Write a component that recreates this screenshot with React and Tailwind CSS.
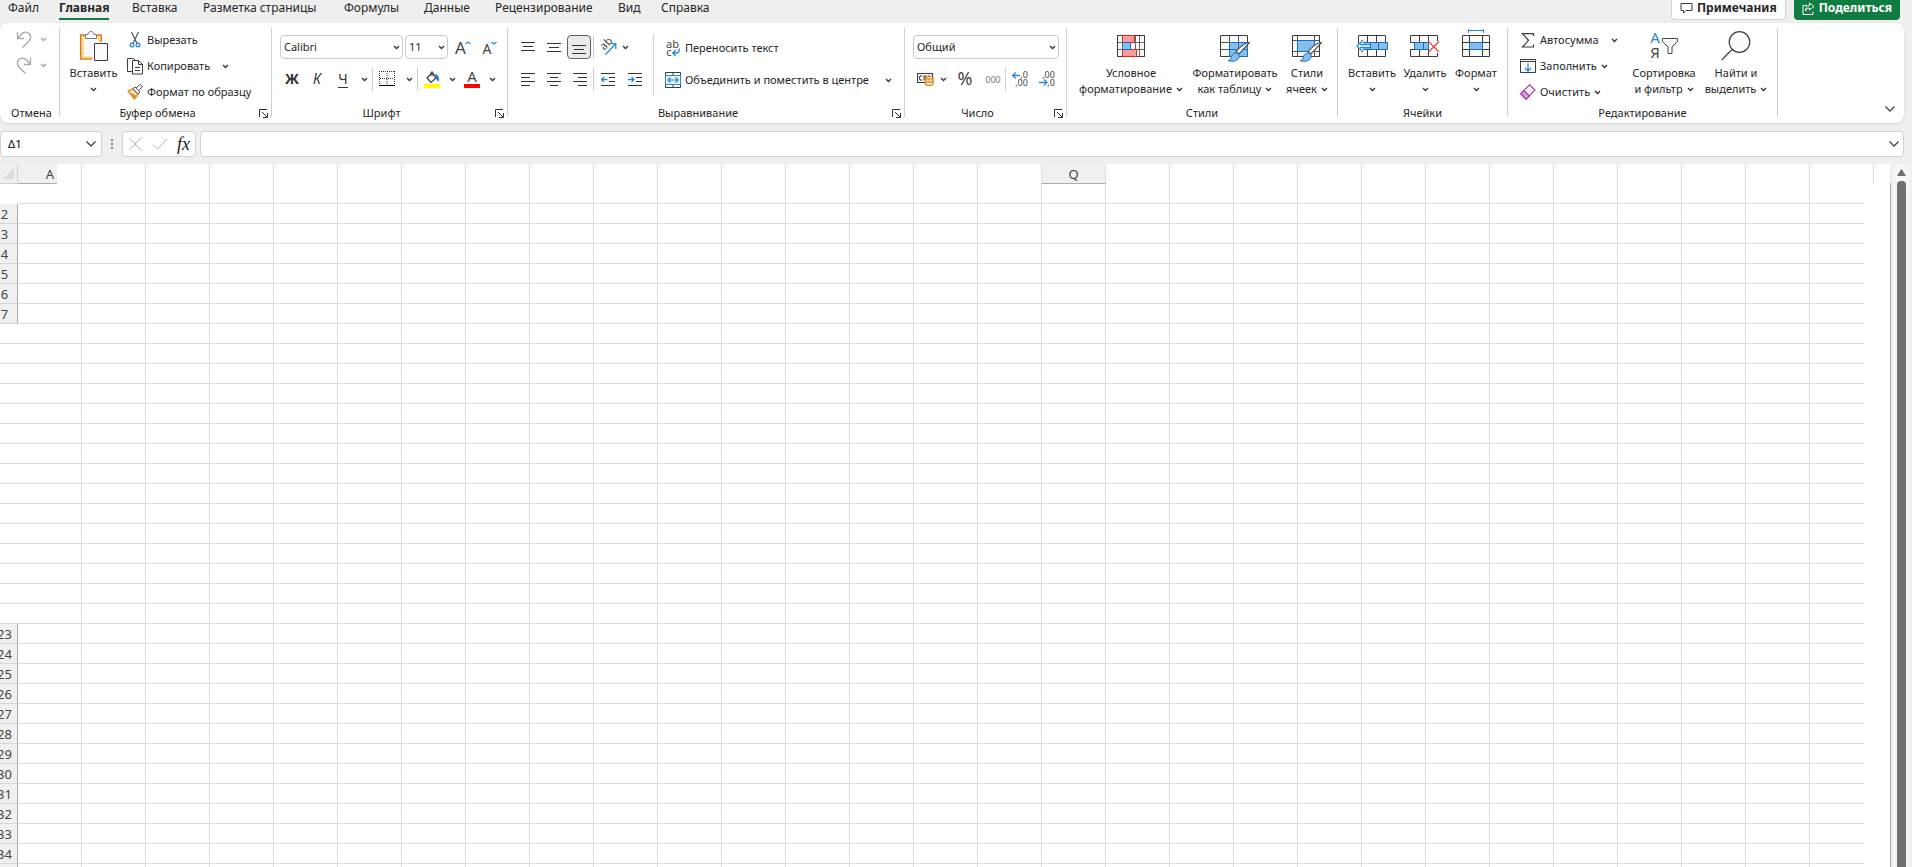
const COLS = Array.from({ length: 27 }, (_, i) => i);
const ROWS = Array.from({ length: 35 }, (_, i) => i + 1);
const COLUMN_NAMES = { 0: "A", 16: "Q" };

const TABS = [
    { name: "Файл", width: "w-[51px]" },
    { name: "Главная", width: "w-[73px]", active: true },
    { name: "Вставка", width: "w-[71px]" },
    { name: "Разметка страницы", width: "w-[141px]" },
    { name: "Формулы", width: "w-[80px]" },
    { name: "Данные", width: "w-[71px]" },
    { name: "Рецензирование", width: "w-[123px]" },
    { name: "Вид", width: "w-[43px]" },
    { name: "Справка", width: "w-[60px]" },
];

function Icon({ w = 16, h = 16, children, className = "" }) {
    return (
        <svg
            width={w}
            height={h}
            viewBox={`0 0 ${w} ${h}`}
            fill="none"
            stroke="#3b3b3b"
            className={`shrink-0 ${className}`}
            aria-hidden="true"
        >
            {children}
        </svg>
    );
}

// letters and digits inside an icon
function Glyph({ x, y, size, color = "#444", children, transform }) {
    return (
        <text x={x} y={y} fontSize={size} fill={color} stroke="none" textAnchor="middle" transform={transform}>
            {children}
        </text>
    );
}

function Chevron({ color = "#333", className = "" }) {
    return (
        <Icon w={7} h={5} className={className}>
            <path d="M1 1l2.5 2.5L6 1" stroke={color} strokeWidth="1.3" />
        </Icon>
    );
}

function BigChevron() {
    return (
        <Icon w={12} h={8}>
            <path d="M1.5 1.5L6 6l4.5-4.5" stroke="#444" strokeWidth="1.3" />
        </Icon>
    );
}

function Divider() {
    return <div className="mt-[5px] h-[89px] w-px shrink-0 bg-[#d1d1d1]" />;
}

function SmallDivider() {
    return <div className="h-6 w-px shrink-0 bg-[#d1d1d1]" />;
}

function Group({ label, width, launcher, children }) {
    return (
        <section className={`flex shrink-0 flex-col ${width}`} aria-label={label}>
            <div className="flex h-[82px] items-start">{children}</div>
            <div className="flex h-4 items-center">
                <h2 className="flex-1 text-center text-[11px] leading-4">{label}</h2>
                {launcher && (
                    <button type="button" aria-label={`Параметры: ${label}`} className="flex w-4 pl-1 pt-px">
                        <Icon w={9} h={9}>
                            <path d="M8 .5H.5V8M3 3l5 5M8.5 4v4.5H4" stroke="#333" />
                        </Icon>
                    </button>
                )}
            </div>
        </section>
    );
}

function IconButton({ label, width = "w-[26px]", active, children }) {
    return (
        <button
            type="button"
            aria-label={label}
            className={`flex h-6 shrink-0 items-center justify-center ${width} ${
                active ? "rounded border border-[#616161] bg-[#ebebeb]" : ""
            }`}
        >
            {children}
        </button>
    );
}

function BigButton({ icon, lines, width, chevronBelow, top = "pt-2", iconHeight = "h-[30px]" }) {
    return (
        <button type="button" className={`flex shrink-0 flex-col items-center ${width} ${top}`}>
            <span className={`flex items-start justify-center ${iconHeight}`}>{icon}</span>
            {lines.map((line, i) => (
                <span key={line} className="flex h-4 items-center gap-1 whitespace-nowrap text-[11px] leading-4">
                    {line}
                    {!chevronBelow && i === lines.length - 1 && <Chevron />}
                </span>
            ))}
            {chevronBelow && (
                <span className="flex h-4 items-center">
                    <Chevron />
                </span>
            )}
        </button>
    );
}

function RowButton({ icon, label, chevron, gap = "gap-1" }) {
    return (
        <button type="button" className={`flex h-[26px] items-center whitespace-nowrap text-[11px] ${gap}`}>
            <span className="flex items-center gap-1">
                <span className="flex w-4 justify-center">{icon}</span>
                {label}
            </span>
            {chevron && <Chevron />}
        </button>
    );
}

function Dropdown({ label, value, width }) {
    return (
        <div className={`relative shrink-0 ${width}`}>
            <select
                aria-label={label}
                defaultValue={value}
                className="block h-6 w-full appearance-none rounded border border-[#c8c8c8] bg-white px-[3px] text-[11px]"
            >
                <option>{value}</option>
            </select>
            <Chevron className="pointer-events-none absolute right-[3px] top-[10px]" />
        </div>
    );
}

function UndoIcon({ flip }) {
    return (
        <Icon w={16} h={17} className={flip ? "-scale-x-100" : ""}>
            <path d="M1.5 1v6.5H8M1.5 7.5L5 3.5C7.5 .5 11 .5 13 2.5s2 5 0 7.5L6.500 16.500" stroke="#a6a6a6" strokeWidth="1.3" />
        </Icon>
    );
}

function PasteIcon() {
    return (
        <Icon w={28} h={31}>
            <path d="M2.5 5.5h17v21h-17z" fill="#fafafa" stroke="#f5d98d" strokeWidth="2.5" />
            <path d="M6 4H.7v24H13M17 4h4.3v8" stroke="#e07b12" strokeWidth="1.4" />
            <path d="M5.5 7.5v-4H8C8.5 1.5 9.5.5 11 .5s2.5 1 3 3h2.5v4z" fill="#fff" stroke="#777" />
            <path d="M12 11h16v20H12z" fill="#fff" stroke="none" />
            <path d="M14.5 12.5h13v17h-13z" fill="#fafafa" stroke="#3b3b3b" />
        </Icon>
    );
}

function ScissorsIcon() {
    return (
        <Icon w={12} h={16}>
            <path d="M2.5 0L8 11.5M9.5 0L4 11.5" stroke="#555" strokeWidth="1.2" />
            <circle cx="3" cy="13" r="1.9" fill="#cfe6f7" stroke="#2b8ad0" strokeWidth="1.2" />
            <circle cx="9" cy="13" r="1.9" fill="#cfe6f7" stroke="#2b8ad0" strokeWidth="1.2" />
        </Icon>
    );
}

function CopyIcon() {
    return (
        <Icon w={16} h={17}>
            <path d="M5 13.5H.5V.5h6l2 2" />
            <path d="M5.5 2.5h6l4 4V16h-10z" fill="#fff" />
            <path d="M11.5 2.5v4h4M8 9.5h5M8 12.5h5" />
        </Icon>
    );
}

function BrushIcon() {
    return (
        <Icon w={16} h={16}>
            <path d="M1 7l5-2 5 5-3.5 5z" fill="#fce3b5" stroke="#e07b12" strokeWidth="1.2" />
            <path d="M4 9l5.5 3-2 3-5-6z" fill="#f28c1e" stroke="none" />
            <path d="M6 4.500L8 3l5 5-2 2zM9 4l4-3.5 2.5 2L12 6.500" fill="#fff" stroke="#555" />
        </Icon>
    );
}

function BordersIcon() {
    return (
        <Icon>
            <path d="M.5 0v14M15.5 0v14M0 .5h16M8 2v12M1 7.5h14" strokeDasharray="1 1" stroke="#333" />
            <path d="M0 14.5h16" stroke="#000" />
        </Icon>
    );
}

function FillIcon() {
    return (
        <Icon w={16} h={17}>
            <path d="M3 7l5-5 4 5-5 4.5z" fill="#fafafa" strokeWidth="1.2" />
            <path d="M7 5V1.5C7 .5 9 .5 9 1.5V5" />
            <path d="M11 3.5c3 .5 4 3 3.5 6.5-2-1-2-3-3.5-6.5z" fill="#2b7cc4" stroke="#2b7cc4" />
            <path d="M0 13h16v4H0z" fill="#ff0" stroke="none" />
        </Icon>
    );
}

function FontColorIcon() {
    return (
        <Icon w={16} h={17}>
            <Glyph x={8} y={11} size={15}>A</Glyph>
            <path d="M0 13h16v4H0z" fill="#f00" stroke="none" />
        </Icon>
    );
}

function FontSizeIcon({ down }) {
    return (
        <Icon w={16} h={15}>
            {down ? <Glyph x={5} y={14} size={14}>A</Glyph> : <Glyph x={5.5} y={14} size={17}>A</Glyph>}
            <path d={down ? "M9.5 2L12 4l2.5-2" : "M10.5 4L13 2l2.5 2"} stroke="#2b8ad0" strokeWidth="1.3" />
        </Icon>
    );
}

// every entry of `rows` is one line: [x start, x end, y]
function LinesIcon({ rows, children }) {
    return (
        <Icon w={14} h={15}>
            {rows.map(([a, b, y]) => (
                <path key={y} d={`M${a} ${y}.5H${b}`} stroke="#333" />
            ))}
            {children}
        </Icon>
    );
}

function OrientationIcon() {
    return (
        <Icon w={17} h={16}>
            <Glyph x={6.5} y={8} size={11} transform="rotate(-45 6.5 5)">ab</Glyph>
            <path d="M5.5 15.5L15.5 5M10.5 4.7h5.3V10" stroke="#2b8ad0" strokeWidth="1.3" />
        </Icon>
    );
}

function WrapIcon() {
    return (
        <Icon w={14} h={17}>
            <Glyph x={6.5} y={8} size={11}>ab</Glyph>
            <Glyph x={3} y={16} size={11}>c</Glyph>
            <path d="M13.3 8.500v1.5c0 2-1 3-3 3H7M9.700 10l-3 3 3 3" stroke="#2b8ad0" strokeWidth="1.3" />
        </Icon>
    );
}

function MergeIcon() {
    return (
        <Icon>
            <path d="M.5 .5h15v15H.5zM8 .5v3M8 12.5v3" fill="#fff" />
            <path d="M.5 3.5h15v9H.5z" fill="#e3f0fa" stroke="#2b8ad0" />
            <path d="M3 8h10M5.5 5.5L3 8l2.5 2.5M10.5 5.5L13 8l-2.5 2.5" stroke="#2b8ad0" strokeWidth="1.2" />
        </Icon>
    );
}

function CurrencyIcon() {
    return (
        <Icon w={17} h={14}>
            <path d="M.5 1.5h15v9H.5z" fill="#fff" strokeWidth="1.2" />
            <path d="M5 4c-2-.5-2.5 1-2.5 2S3 8.500 5 8M7 8.500V4h2v4.500M11 4h2" strokeWidth="1.1" />
            <path d="M8.500 6c0-2 7.5-2 7.5 0v6c0 2-7.5 2-7.5 0z" fill="#fce3b5" stroke="#e07b12" strokeWidth="1.2" />
            <path d="M8.500 6c0 1.5 7.5 1.5 7.5 0M8.500 9c0 1.5 7.5 1.5 7.5 0" stroke="#e07b12" strokeWidth="1.2" />
        </Icon>
    );
}

function PercentIcon() {
    return (
        <Icon>
            <Glyph x={8} y={14} size={18}>%</Glyph>
        </Icon>
    );
}

function ThousandsIcon() {
    return (
        <Icon w={16} h={9}>
            <Glyph x={8} y={8} size={9} color="#777">000</Glyph>
        </Icon>
    );
}

function DecimalIcon({ remove }) {
    return (
        <Icon w={16} h={16}>
            <Glyph x={remove ? 9.5 : 12} y={7} size={9}>{remove ? ",00" : ",0"}</Glyph>
            <Glyph x={remove ? 12 : 9.5} y={15} size={9}>{remove ? ",0" : ",00"}</Glyph>
            <path
                d={remove ? "M0 11.5h8M5 8.500l3 3-3 3" : "M8 4.500H.5M3.700 1.500l-3 3 3 3"}
                stroke="#2b8ad0"
                strokeWidth="1.3"
            />
        </Icon>
    );
}

function ConditionalIcon() {
    return (
        <Icon w={28} h={22}>
            <path d="M.5 .5h27v21H.5zM.5 7.5h27M.5 14.5h27M5.5 .5v21M18.5 .5v21M22.5 .5v21" fill="#fafafa" stroke="#666" />
            <path d="M.5 .5h27v21H.5z" />
            <path d="M5.5 .5h12v7h-12zM5.5 14.5h14v7h-14z" fill="#ff9a9a" stroke="#d92b20" />
            <path d="M5.5 7.5h8v7h-8z" fill="#83beec" stroke="#1a6fc0" />
        </Icon>
    );
}

function PaintBrush() {
    return (
        <>
            <path d="M29.500 7.5L19 19l-3-2.5C20 12 26 7.5 29.500 7.5z" fill="#fff" stroke="#555" strokeWidth="1.2" />
            <path d="M16.500 18c2 .5 3.5 2 2.5 4.500-2 4-7 4.500-11 3 3-.5 3-2 3.5-4s3-3.800 5-3.500z" fill="#83beec" stroke="#1a6fc0" />
        </>
    );
}

function FormatTableIcon() {
    return (
        <Icon w={30} h={27}>
            <path d="M.5 .5h27v21H.5z" fill="#fafafa" />
            <path d="M9.5 7.5h18v14h-18z" fill="#83beec" stroke="none" />
            <path d="M.5 7.5h27M.5 14.5h9M9.5 .5v21M18.5 .5v7" stroke="#555" />
            <path d="M9.5 14.5h18M18.5 7.5v14M9.5 7.5h18v14h-18z" stroke="#1a6fc0" />
            <PaintBrush />
        </Icon>
    );
}

function CellStylesIcon() {
    return (
        <Icon w={30} h={27}>
            <path d="M.5 .5h27v21H.5z" fill="#fafafa" />
            <path d="M.5 5.5h27M.5 16.5h27M5.5 .5v21M22.5 .5v21" stroke="#555" />
            <path d="M5.5 5.5h17v11h-17z" fill="#83beec" stroke="#1a6fc0" />
            <PaintBrush />
        </Icon>
    );
}

function InsertCellsIcon() {
    return (
        <Icon w={32} h={22}>
            <path d="M2.5 .5h27v21h-27zM11.5 .5v21M20.5 .5v21" fill="#fafafa" />
            <path d="M5.5 7.5h26v7h-26zM14.5 7.5v7M22.5 7.5v7" fill="#83beec" stroke="#1a6fc0" />
            <path d="M0 11l7-7v4.500h7v4H7V17z" fill="#fff" stroke="none" />
            <path d="M14 9.5H4M14 12.5H4M7 5l-6 6 6 6" stroke="#2b8ad0" strokeWidth="1.3" />
        </Icon>
    );
}

function DeleteCellsIcon() {
    return (
        <Icon w={30} h={22}>
            <path d="M.5 7.5v-7h27v7zM.5 14.5v7h27v-7zM9.5 .5v7M18.5 .5v7M9.5 14.5v7M18.5 14.5v7" fill="#fafafa" />
            <path d="M4.5 7.5h14v7h-14zM13.5 7.5v7" fill="#83beec" stroke="#1a6fc0" />
            <path d="M19 6h11v12H19z" fill="#fff" stroke="none" />
            <path d="M18.5 6.5L29 17M29 6.5L18.5 17" stroke="#e8483f" strokeWidth="1.3" />
        </Icon>
    );
}

function FormatCellsIcon() {
    return (
        <Icon w={28} h={28}>
            <path d="M6.5 1.5h15M6.5 0v4M21.5 0v4" stroke="#2b8ad0" />
            <path d="M.5 6.5h27v21H.5zM.5 13.5h27M.5 20.5h27M7.5 6.5v21M20.5 6.5v21" fill="#fafafa" />
            <path d="M7.5 13.5h13v7h-13z" fill="#83beec" stroke="#1a6fc0" />
        </Icon>
    );
}

function SumIcon() {
    return (
        <Icon w={14} h={15}>
            <path d="M12.5 3V.7h-11l6 6.6-6 6.7h11v-2.500" strokeWidth="1.2" />
        </Icon>
    );
}

function FillDownIcon() {
    return (
        <Icon w={16} h={15}>
            <path d="M.5 .5h15v13H.5zM.5 2.5h15" fill="#fafafa" />
            <path d="M8 4.500V12M5 9l3 3 3-3" stroke="#2b8ad0" strokeWidth="1.3" />
        </Icon>
    );
}

function EraserIcon() {
    return (
        <Icon w={16} h={16}>
            <path d="M9.5 .8L15 6l-9 9.200L.8 9.800z" fill="#fff" stroke="#a33fae" strokeWidth="1.2" />
            <path d="M4 6.500L9.500 12 6 15.200.8 9.800z" fill="#d99ae0" stroke="#a33fae" strokeWidth="1.2" />
        </Icon>
    );
}

function SortFilterIcon() {
    return (
        <Icon w={28} h={28}>
            <Glyph x={5} y={12} size={15} color="#2b8ad0">А</Glyph>
            <Glyph x={5} y={27} size={15}>Я</Glyph>
            <path d="M12.5 7.5h15v3L22 16v6.500h-4V16l-5.500-5.500z" fill="#fafafa" stroke="#444" />
        </Icon>
    );
}

function FindIcon() {
    return (
        <Icon w={30} h={30}>
            <circle cx="18.5" cy="11" r="10.3" fill="#fafafa" stroke="#444" strokeWidth="1.2" />
            <path d="M11 18.5L.7 29" stroke="#444" strokeWidth="1.2" />
        </Icon>
    );
}

function TopBar() {
    return (
        <header className="flex h-[23px] items-start overflow-hidden pl-2">
            <nav className="flex">
                {TABS.map((tab) => (
                    <a key={tab.name} href="#" className={`block whitespace-nowrap text-xs leading-4 ${tab.width}`}>
                        <span
                            className={
                                tab.active
                                    ? "inline-block h-5 border-b-2 border-[#107c41] font-bold"
                                    : "inline-block"
                            }
                        >
                            {tab.name}
                        </span>
                    </a>
                ))}
            </nav>
            <div className="ml-auto mr-3 flex gap-2 text-xs font-bold leading-4">
                <button type="button" className="flex h-5 items-center gap-1 rounded-b border border-t-0 border-[#d1d1d1] bg-white px-2 pb-1">
                    <Icon w={13} h={12}>
                        <path d="M1 1.5h11v7H6L3.5 11V8.500H1z" />
                    </Icon>
                    Примечания
                </button>
                <button type="button" className="flex h-5 items-center gap-1 rounded-b bg-[#107c41] px-2 pb-1 text-white">
                    <Icon w={13} h={13}>
                        <path d="M5 3.5H1v9h10v-3M7.5 1L12 4.500 7.500 8V6c-2 0-3 1-4 3 0-3 1.5-5.500 4-5.500z" stroke="#fff" />
                    </Icon>
                    Поделиться
                </button>
            </div>
        </header>
    );
}

function Ribbon() {
    return (
        <div className="mr-2 flex h-[100px] rounded-lg bg-white shadow">
            <Group label="Отмена" width="w-[59px] pl-1">
                <div className="flex flex-col gap-[9px] pl-3 pt-2">
                    {["Отменить", "Вернуть"].map((name, i) => (
                        <button key={name} type="button" aria-label={name} className="flex items-center gap-2">
                            <UndoIcon flip={i === 1} />
                            <Chevron color="#a6a6a6" />
                        </button>
                    ))}
                </div>
            </Group>
            <Divider />
            <Group label="Буфер обмена" width="w-[211px]" launcher>
                <BigButton
                    icon={<PasteIcon />}
                    lines={["Вставить"]}
                    width="w-[67px]"
                    chevronBelow
                    iconHeight="h-[34px]"
                />
                <div className="pt-1">
                    <RowButton icon={<ScissorsIcon />} label="Вырезать" />
                    <RowButton icon={<CopyIcon />} label="Копировать" chevron gap="gap-3" />
                    <RowButton icon={<BrushIcon />} label="Формат по образцу" />
                </div>
            </Group>
            <Divider />
            <Group label="Шрифт" width="w-[235px]" launcher>
                <div className="flex flex-col gap-2 pl-2 pt-3">
                    <div className="flex items-center">
                        <Dropdown label="Шрифт" value="Calibri" width="mr-[2px] w-[123px]" />
                        <Dropdown label="Размер шрифта" value="11" width="w-[43px]" />
                        <IconButton label="Увеличить размер шрифта" width="w-[30px]">
                            <FontSizeIcon />
                        </IconButton>
                        <IconButton label="Уменьшить размер шрифта" width="w-6">
                            <FontSizeIcon down />
                        </IconButton>
                    </div>
                    <div className="flex items-center text-sm text-[#333]">
                        <IconButton label="Полужирный" width="w-6">
                            <b>Ж</b>
                        </IconButton>
                        <IconButton label="Курсив">
                            <i>К</i>
                        </IconButton>
                        <IconButton label="Подчеркнутый">
                            <span className="border-b border-[#333] leading-4">Ч</span>
                        </IconButton>
                        <IconButton label="Вид подчеркивания" width="w-4">
                            <Chevron />
                        </IconButton>
                        <SmallDivider />
                        <IconButton label="Границы" width="w-7">
                            <BordersIcon />
                        </IconButton>
                        <IconButton label="Вид границ" width="w-4">
                            <Chevron />
                        </IconButton>
                        <SmallDivider />
                        <IconButton label="Цвет заливки" width="w-7">
                            <FillIcon />
                        </IconButton>
                        <IconButton label="Выбор заливки" width="w-3">
                            <Chevron />
                        </IconButton>
                        <IconButton label="Цвет текста" width="w-7">
                            <FontColorIcon />
                        </IconButton>
                        <IconButton label="Выбор цвета текста" width="w-3">
                            <Chevron />
                        </IconButton>
                    </div>
                </div>
            </Group>
            <Divider />
            <Group label="Выравнивание" width="w-[396px]" launcher>
                <div className="flex flex-col gap-2 pl-[7px] pt-3">
                    <div className="flex items-center">
                        <IconButton label="По верхнему краю">
                            <LinesIcon rows={[[0, 14, 2], [2, 12, 6], [0, 14, 10]]} />
                        </IconButton>
                        <IconButton label="По середине">
                            <LinesIcon rows={[[0, 14, 3], [2, 12, 7], [0, 14, 11]]} />
                        </IconButton>
                        <IconButton label="По нижнему краю" width="w-6" active>
                            <LinesIcon rows={[[0, 14, 5], [2, 12, 9], [0, 14, 13]]} />
                        </IconButton>
                        <div className="ml-[2px] flex items-center">
                            <SmallDivider />
                            <IconButton label="Ориентация" width="w-[28px]">
                                <OrientationIcon />
                            </IconButton>
                            <Chevron />
                        </div>
                    </div>
                    <div className="flex items-center">
                        <IconButton label="По левому краю">
                            <LinesIcon rows={[[0, 14, 1], [0, 9, 5], [0, 14, 9], [0, 9, 13]]} />
                        </IconButton>
                        <IconButton label="По центру">
                            <LinesIcon rows={[[0, 14, 1], [3, 11, 5], [0, 14, 9], [3, 11, 13]]} />
                        </IconButton>
                        <IconButton label="По правому краю">
                            <LinesIcon rows={[[0, 14, 1], [5, 14, 5], [0, 14, 9], [5, 14, 13]]} />
                        </IconButton>
                        <SmallDivider />
                        <IconButton label="Уменьшить отступ" width="w-7">
                            <LinesIcon rows={[[0, 14, 1], [8, 14, 5], [8, 14, 9], [0, 14, 13]]}>
                                <path d="M6.5 7.5h-6M3 5L.5 7.5 3 10" stroke="#2b8ad0" strokeWidth="1.3" />
                            </LinesIcon>
                        </IconButton>
                        <IconButton label="Увеличить отступ">
                            <LinesIcon rows={[[0, 14, 1], [8, 14, 5], [8, 14, 9], [0, 14, 13]]}>
                                <path d="M0 7.5h6M3.5 5L6 7.5 3.5 10" stroke="#2b8ad0" strokeWidth="1.3" />
                            </LinesIcon>
                        </IconButton>
                    </div>
                </div>
                <div className="ml-[5px] mt-[11px] h-[62px] w-px bg-[#d1d1d1]" />
                <div className="flex flex-col gap-[6px] pl-[11px] pt-3">
                    <RowButton icon={<WrapIcon />} label="Переносить текст" />
                    <RowButton icon={<MergeIcon />} label="Объединить и поместить в центре" chevron gap="gap-4" />
                </div>
            </Group>
            <Divider />
            <Group label="Число" width="w-[161px]" launcher>
                <div className="flex flex-col gap-2 pl-2 pt-3">
                    <Dropdown label="Числовой формат" value="Общий" width="w-[146px]" />
                    <div className="flex items-center">
                        <IconButton label="Финансовый формат" width="w-6">
                            <CurrencyIcon />
                        </IconButton>
                        <IconButton label="Выбор валюты" width="w-3">
                            <Chevron />
                        </IconButton>
                        <IconButton label="Процентный формат" width="w-8">
                            <PercentIcon />
                        </IconButton>
                        <IconButton label="Формат с разделителями" width="w-6">
                            <ThousandsIcon />
                        </IconButton>
                        <SmallDivider />
                        <IconButton label="Увеличить разрядность" width="w-7">
                            <DecimalIcon />
                        </IconButton>
                        <IconButton label="Уменьшить разрядность">
                            <DecimalIcon remove />
                        </IconButton>
                    </div>
                </div>
            </Group>
            <Divider />
            <Group label="Стили" width="w-[270px]">
                <div className="flex pl-2 pt-1">
                    <BigButton icon={<ConditionalIcon />} lines={["Условное", "форматирование"]} width="w-[112px]" />
                    <BigButton icon={<FormatTableIcon />} lines={["Форматировать", "как таблицу"]} width="w-24" />
                    <BigButton icon={<CellStylesIcon />} lines={["Стили", "ячеек"]} width="w-12" />
                </div>
            </Group>
            <Divider />
            <Group label="Ячейки" width="w-[169px]">
                <div className="flex pl-2 pt-1">
                    <BigButton icon={<InsertCellsIcon />} lines={["Вставить"]} width="w-[52px]" chevronBelow />
                    <BigButton icon={<DeleteCellsIcon />} lines={["Удалить"]} width="w-[54px]" chevronBelow />
                    <BigButton
                        icon={<FormatCellsIcon />}
                        lines={["Формат"]}
                        width="w-12"
                        chevronBelow
                        top="pt-[2px]"
                        iconHeight="h-9"
                    />
                </div>
            </Group>
            <Divider />
            <Group label="Редактирование" width="w-[269px]">
                <div className="w-[114px] pl-3 pt-1">
                    <RowButton icon={<SumIcon />} label="Автосумма" chevron gap="gap-3" />
                    <RowButton icon={<FillDownIcon />} label="Заполнить" chevron />
                    <RowButton icon={<EraserIcon />} label="Очистить" chevron />
                </div>
                <BigButton
                    icon={<SortFilterIcon />}
                    lines={["Сортировка", "и фильтр"]}
                    width="w-[84px]"
                    iconHeight="h-[34px]"
                />
                <BigButton
                    icon={<FindIcon />}
                    lines={["Найти и", "выделить"]}
                    width="w-[60px]"
                    iconHeight="h-[34px]"
                />
            </Group>
            <Divider />
            <button type="button" aria-label="Свернуть ленту" className="mb-[10px] ml-auto mr-2 self-end">
                <BigChevron />
            </button>
        </div>
    );
}

function FormulaBar() {
    return (
        <div className="mr-2 mt-2 flex h-[26px]">
            <div className="flex w-[102px] items-center rounded border border-[#d1d1d1] bg-white pr-1">
                <input
                    aria-label="Имя"
                    defaultValue="Δ1"
                    className="w-full min-w-0 bg-transparent pl-[7px] text-[11px] font-medium outline-none"
                />
                <BigChevron />
            </div>
            <div className="flex w-5 items-center justify-center">
                <Icon w={2} h={10}>
                    <path d="M1 0v2M1 4v2M1 8v2" stroke="#888" strokeWidth="2" />
                </Icon>
            </div>
            <div className="mr-1 flex w-[74px] items-center justify-between rounded border border-[#d1d1d1] bg-white px-[5px]">
                <button type="button" aria-label="Отмена">
                    <Icon w={14} h={14}>
                        <path d="M1.5 1.5l11 11M12.5 1.5l-11 11" stroke="#b5b5b5" />
                    </Icon>
                </button>
                <button type="button" aria-label="Ввод">
                    <Icon w={16} h={14}>
                        <path d="M1 7.5L5.5 12 15 2" stroke="#b5b5b5" />
                    </Icon>
                </button>
                <button
                    type="button"
                    aria-label="Вставить функцию"
                    className="font-['Liberation_Serif',serif] text-lg italic leading-5 text-[#222]"
                >
                    fx
                </button>
            </div>
            <div className="flex flex-1 items-center rounded border border-[#d1d1d1] bg-white pr-[3px]">
                <input aria-label="Строка формул" className="w-full bg-transparent px-2 text-xs outline-none" />
                <BigChevron />
            </div>
        </div>
    );
}

function Sheet() {
    return (
        <div className="mt-[7px] flex min-h-0 flex-1">
            <div className="min-w-0 flex-1 overflow-hidden bg-white">
                <table className="w-full table-fixed border-separate border-spacing-0 text-[13px] leading-5 text-[#444]">
                    <colgroup>
                        <col className="w-[18px]" />
                        {COLS.map((c) => (
                            <col key={c} className="w-16" />
                        ))}
                        <col className="w-16" />
                        <col className="w-[54px]" />
                        <col className="w-[10px]" />
                        <col />
                    </colgroup>
                    <thead>
                        <tr className="h-5">
                            <th className="border-b border-r border-[#d0d0d0] bg-[#f0f0f0] p-0">
                                <Icon w={13} h={13} className="ml-[2px]">
                                    <path d="M12 1v11H1z" fill="#dcdcdc" stroke="none" />
                                </Icon>
                            </th>
                            {[...COLS, 27].map((c) => (
                                <th key={c} scope="col" className="p-0 font-normal">
                                    {c === 0 ? (
                                        <div className="flex h-5 border-r border-[#dedede]">
                                            <span className="w-[39px] border-b border-[#ababab] bg-[#f0f0f0] pr-[3px] text-right">
                                                A
                                            </span>
                                        </div>
                                    ) : COLUMN_NAMES[c] ? (
                                        <div className="h-5 border-b border-r border-b-[#ababab] border-r-[#dedede] bg-[#f0f0f0]">
                                            {COLUMN_NAMES[c]}
                                        </div>
                                    ) : (
                                        <div className="h-5 border-r border-[#dedede]" />
                                    )}
                                </th>
                            ))}
                            <th colSpan={2} className="border-r border-[#dedede] p-0" />
                            <th className="p-0" />
                        </tr>
                    </thead>
                    <tbody className="leading-[18px]">
                        {ROWS.map((row) => {
                            const numbered = (row > 1 && row < 8) || row > 22;
                            return (
                                <tr key={row} className="h-5">
                                    {numbered ? (
                                        <th
                                            scope="row"
                                            className="border-b border-r border-b-[#d6d6d6] border-r-[#ababab] bg-[#f0f0f0] p-0 font-normal"
                                        >
                                            <span className="-ml-[9px] block w-[27px]">{row}</span>
                                        </th>
                                    ) : (
                                        <th className={row === 1 ? "p-0" : "border-b border-[#dedede] p-0"} />
                                    )}
                                    {COLS.map((c) => (
                                        <td key={c} className="border-b border-r border-[#dedede] p-0" />
                                    ))}
                                    <td className="border-b border-r border-[#dedede] p-0" />
                                    <td className="border-b border-[#dedede] p-0" />
                                    <td colSpan={2} className="p-0" />
                                </tr>
                            );
                        })}
                    </tbody>
                </table>
            </div>
            <div className="mt-[19px] w-px bg-[#ababab]" />
            <div className="ml-[2px] mr-[2px] flex w-[17px] flex-col items-center rounded-t-lg bg-[#f5f5f5] pt-[5px]">
                <Icon w={9} h={7}>
                    <path d="M0 7L4 .5h1L9 7z" fill="#6e6e6e" stroke="none" />
                </Icon>
                <div className="mt-[5px] w-[9px] flex-1 rounded-t bg-[#6e6e6e]" />
            </div>
        </div>
    );
}

export default function App() {
    return (
        <div className="flex h-screen flex-col overflow-hidden bg-[#efefef] font-['Noto_Sans',sans-serif] text-[#262626]">
            <TopBar />
            <Ribbon />
            <FormulaBar />
            <Sheet />
        </div>
    );
}
